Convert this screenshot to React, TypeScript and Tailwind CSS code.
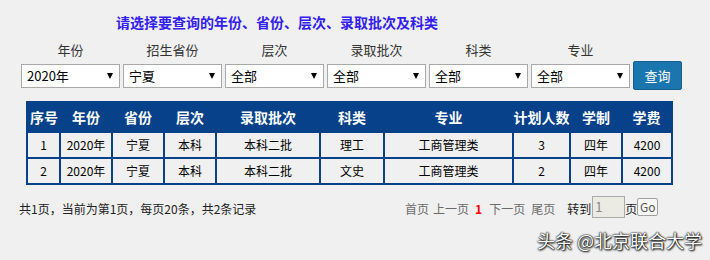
const selects = [
    { label: '年份', value: '2020年' },
    { label: '招生省份', value: '宁夏' },
    { label: '层次', value: '全部' },
    { label: '录取批次', value: '全部' },
    { label: '科类', value: '全部' },
    { label: '专业', value: '全部' },
];

const columns = [
    { title: '序号', w: 'w-[33px]' },
    { title: '年份', w: 'w-[52px]' },
    { title: '省份', w: 'w-[52px]' },
    { title: '层次', w: 'w-[52px]' },
    { title: '录取批次', w: 'w-[104px]' },
    { title: '科类', w: 'w-[64px]' },
    { title: '专业', w: 'w-[129px]' },
    { title: '计划人数', w: 'w-[57px]' },
    { title: '学制', w: 'w-[52px]' },
    { title: '学费', w: 'w-[50px]' },
];

const rows = [
    ['1', '2020年', '宁夏', '本科', '本科二批', '理工', '工商管理类', '3', '四年', '4200'],
    ['2', '2020年', '宁夏', '本科', '本科二批', '文史', '工商管理类', '2', '四年', '4200'],
];

const FakeSelect = ({ value }: { value: string }) => (
    <div className="flex h-[24px] w-[99px] items-center justify-between border border-[#a9a9a9] bg-white pl-[5px] pr-[6px] text-[13px] text-black">
        <span>{value}</span>
        <svg width="6" height="6" viewBox="0 0 6 6">
            <polygon points="0,0 6,0 3,6" fill="#000" />
        </svg>
    </div>
);

const App = () => {
    return (
        <div className="relative h-[260px] w-[710px] overflow-hidden bg-[#f0f0f0] font-['Noto_Sans_CJK_SC',sans-serif] text-[#222]">
            <div className="pl-[116px] pt-[13px] text-[14px] font-bold leading-[18px] text-[#3320f0]">
                请选择要查询的年份、省份、层次、录取批次及科类
            </div>

            <div className="ml-[21px] mt-[11px] flex gap-[3px] text-[13px] leading-[16px] text-[#333]">
                {selects.map((s) => (
                    <div key={s.label} className="w-[99px] text-center">
                        {s.label}
                    </div>
                ))}
            </div>

            <div className="ml-[21px] mt-[3px] flex h-[29px] items-center gap-[3px]">
                {selects.map((s) => (
                    <FakeSelect key={s.label} value={s.value} />
                ))}
                <button className="h-[29px] w-[49px] rounded-[2px] border border-[#15608f] bg-[#1b75ae] text-[13px] text-white">
                    查询
                </button>
            </div>

            <table className="ml-[26px] mt-[11px] w-[645px] table-fixed border-collapse border-2 border-[#06418a] text-center">
                <thead>
                    <tr className="h-[30px] bg-[#06418a] text-[14px] font-bold text-white">
                        {columns.map((c) => (
                            <th key={c.title} className={`${c.w} p-0 font-bold`}>
                                {c.title}
                            </th>
                        ))}
                    </tr>
                </thead>
                <tbody>
                    {rows.map((r) => (
                        <tr key={r[0]} className="h-[26px] text-[12px] text-black">
                            {r.map((cell, i) => (
                                <td key={i} className="border-2 border-[#06418a] p-0">
                                    {cell}
                                </td>
                            ))}
                        </tr>
                    ))}
                </tbody>
            </table>

            <div className="mt-[11px] flex h-[22px] items-end text-[12px] leading-[18px]">
                <div className="w-[405px] pl-[19px] text-[#222]">
                    共1页，当前为第1页，每页20条，共2条记录
                </div>
                <div className="flex items-end text-[#6b6b6b]">
                    <span>首页</span>
                    <span className="ml-[4px]">上一页</span>
                    <span className="ml-[6px] font-bold text-[#ff0000]">1</span>
                    <span className="ml-[7px]">下一页</span>
                    <span className="ml-[6px]">尾页</span>
                    <span className="ml-[12px] text-[#222]">转到</span>
                    <div className="ml-[1px] flex h-[22px] w-[33px] items-center border border-[#a9a9a9] bg-[#ebebe4] pl-[2px] text-[13px] text-[#888]">
                        1
                    </div>
                    <span className="text-[#222]">页</span>
                    <button className="mb-[2px] h-[18px] w-[21px] rounded-[2px] border border-[#a0a0a0] bg-[#f8f8f8] p-0 text-[12px] leading-[16px] text-[#555]">
                        Go
                    </button>
                </div>
            </div>

            <div className="absolute bottom-[8px] right-[8px] text-[18px] leading-[24px] text-white [text-shadow:0_0_1px_#000,0_0_2px_#000,1px_1px_2px_#000]">
                头条 @北京联合大学
            </div>
        </div>
    );
};

export default App;
